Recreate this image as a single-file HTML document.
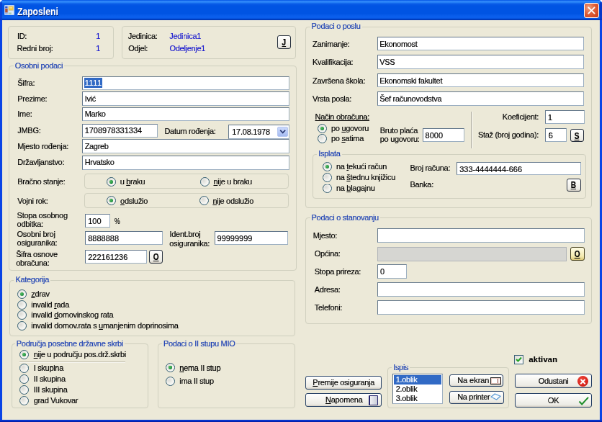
<!DOCTYPE html>
<html><head><meta charset="utf-8"><title>Zaposleni</title>
<style>
html,body{margin:0;padding:0;}
body{width:602px;height:422px;overflow:hidden;background:#fff;position:relative;}
#w{position:absolute;left:0;top:0;width:836.11px;height:586.11px;transform:scale(0.72);transform-origin:0 0;will-change:transform;font-family:"Liberation Sans",sans-serif;font-size:11px;color:#000;letter-spacing:-0.3px;-webkit-text-stroke:0.18px;overflow:hidden;
 background:#0A44E6;border-radius:5px 5px 0 0;}
#bb{position:absolute;left:0;right:0;bottom:0;height:3.2px;background:linear-gradient(to bottom,#0A40E0 0%,#0630C8 45%,#001CA0 100%);}
#tb{position:absolute;left:0;top:0;width:100%;height:27.7px;border-radius:5px 5px 0 0;
 background:linear-gradient(to bottom,#0A5CE8 0%,#1568EE 4%,#3D95FF 7%,#2A85F8 11%,#0A5CE8 19%,#0054E3 30%,#0054E3 66%,#0A5EEC 80%,#0A5EEC 90%,#0040C4 95%,#0034B0 100%);}
#title{position:absolute;left:24.31px;top:7.6px;color:#fff;font-weight:bold;font-size:14.4px;line-height:17px;letter-spacing:0;-webkit-text-stroke:0;text-shadow:1px 1px 0 #0A2A80;white-space:nowrap;transform-origin:0 0;transform:scaleX(0.845);}
#client{position:absolute;left:2.8px;top:27.7px;right:3.5px;bottom:3.1px;background:#ECE9D8;}
#close{position:absolute;left:810.83px;top:4.4px;width:18.7px;height:18.7px;border:1px solid #fff;border-radius:3px;background:radial-gradient(circle at 30% 30%,#F0A080 0%,#E0603A 45%,#C93A16 100%);}
.t{position:absolute;white-space:nowrap;line-height:13px;height:13px;}
.blue{color:#1818D0;}
.num{letter-spacing:0;}
.gb{position:absolute;box-sizing:border-box;border:1px solid #D0D0BF;border-radius:4px;}
.gl{position:absolute;white-space:nowrap;line-height:13px;color:#1C40B4;background:#ECE9D8;padding:0 2px;}
.in{position:absolute;box-sizing:border-box;border:1px solid;border-color:#64788C #9DB0C2 #9DB0C2 #64788C;background:#fff;line-height:15.32px;padding-left:3.5px;white-space:nowrap;overflow:hidden;}
.in.gray{background:#D6D6D2;border-color:#B0B4B8;}
.sel{background:#316AC5;color:#fff;padding:1px 0.6px 1px 0.6px;letter-spacing:0.45px;margin-left:-0.6px;}
.rb{position:absolute;width:13px;height:13px;box-sizing:border-box;border:1px solid #2F5A6E;border-radius:50%;background:radial-gradient(circle at 35% 35%,#DCDCD7 0%,#F3F3EF 50%,#fff 100%);}
.rb.on::after{content:"";position:absolute;left:3px;top:3px;width:5px;height:5px;border-radius:50%;background:radial-gradient(circle at 35% 35%,#4CBF5A,#2A9548 60%,#1E7038);}
.btn{position:absolute;box-sizing:border-box;border:1px solid #2A4468;border-radius:3px;background:linear-gradient(to bottom,#fff 0%,#F5F4EF 50%,#ECEBE5 85%,#D6D0C5 100%);text-align:center;white-space:nowrap;}
.btn.b{font-weight:bold;font-size:12px;letter-spacing:0;padding-top:0.8px;-webkit-text-stroke:0.2px;border-color:#27303E;}
.btn.b u{display:inline-block;transform:scaleX(0.84);}
.btn.yel{background:linear-gradient(to bottom,#FFFCE4,#F4EAB0 70%,#DCC878);border-color:#4A4420;}
.hl{position:absolute;height:0;border-top:1px solid #C4C1B0;border-bottom:1px solid #F8F7F0;}
.vl{position:absolute;width:0;border-left:1px solid #ACA899;border-right:1px solid #fff;}
.cb{position:absolute;width:13px;height:13px;box-sizing:border-box;border:1px solid #3E6478;background:linear-gradient(135deg,#DCDCD7,#fff);}
.cb svg{position:absolute;left:-1px;top:-1px;}
.lb{position:absolute;box-sizing:border-box;border:1px solid;border-color:#64788C #9DB0C2 #9DB0C2 #64788C;background:#fff;line-height:12.5px;padding:1px 1px;overflow:hidden;}
.lb div{padding-left:3px;height:12.8px;}
.lb .selrow{background:#316AC5;color:#fff;}
.abs{position:absolute;}
.ic-x{position:absolute;width:15.4px;height:15.4px;border-radius:50%;background:radial-gradient(circle at 40% 35%,#F0483C,#D8251C 60%,#B01810);}
.ic-x::before,.ic-x::after{content:"";position:absolute;left:3.2px;top:6.5px;width:9px;height:2.4px;background:#fff;transform:rotate(45deg);}
.ic-x::after{transform:rotate(-45deg);}
.dd{position:absolute;right:0.8px;top:2px;bottom:1.6px;width:15.5px;border-radius:2px;background:linear-gradient(to bottom,#CBD9FB,#B6C9F7 60%,#A5BBF0);border:1px solid #B5C7F2;box-sizing:border-box;}
.dd::after{content:"";position:absolute;left:3.4px;top:1.6px;width:5.4px;height:5.4px;border-right:2.4px solid #2C3C74;border-bottom:2.4px solid #2C3C74;transform:rotate(45deg) scale(0.82);}
.ic-note{position:absolute;width:13.5px;height:13.5px;border:1.5px solid #24246E;border-left-width:2.5px;background:linear-gradient(to right,#F0F0F4,#C8CCD8);box-sizing:border-box;border-radius:1px;}
.ic-scr{position:absolute;width:15px;height:10.5px;border:1.5px solid #1a1a1a;background:linear-gradient(to right,#fff 0,#fff 68%,#8A3A30 68%,#8A3A30 80%,#fff 80%);box-sizing:border-box;box-shadow:inset 0 0 0 1px #E8C8C0;}
</style></head><body>
<div id="w">
<div id="tb"></div>
<div id="client"></div><div id="bb"></div><div class="abs" style="left:0;top:3px;width:2.8px;height:25px;background:#0A38D0;opacity:.7"></div><div class="abs" style="right:0;top:3px;width:3.5px;height:25px;background:#0630C0;opacity:.8"></div>
<svg class="abs" style="left:5.6px;top:7.4px" width="14" height="14" viewBox="0 0 14 14"><rect x="0" y="0" width="14" height="14" rx="1" fill="#BCD2F6"/><rect x="1.2" y="1.8" width="3.2" height="2.4" fill="#3454C4"/><rect x="1.2" y="4.8" width="3.4" height="5.6" fill="#B4502C"/><rect x="1.2" y="10.6" width="3.4" height="2.2" fill="#9CB4E8"/><rect x="5.8" y="1.8" width="6.8" height="5.6" fill="#F6C840"/><rect x="7" y="3" width="4" height="1.6" fill="#FBE38A"/><rect x="5.8" y="8.2" width="6.8" height="4.6" fill="#DCEAF8"/><rect x="5.8" y="10.4" width="4" height="2.4" fill="#A4CCB0"/></svg>
<div id="title">Zaposleni</div>
<div id="close"><svg width="19" height="19" viewBox="0 0 19 19"><path d="M5.3 5.3 L13.6 13.6 M13.6 5.3 L5.3 13.6" stroke="#fff" stroke-width="1.9" stroke-linecap="round"/></svg></div>
<div class="gb " style="left:10.97px;top:36.11px;width:147.08px;height:45.97px;"></div>
<div class="t " style="left:23.89px;top:44.14px;">ID:</div>
<div class="t " style="left:23.61px;top:60.81px;">Redni broj:</div>
<div class="t blue num" style="left:133.33px;top:44.42px;">1</div>
<div class="t blue num" style="left:133.33px;top:61.09px;">1</div>
<div class="gb " style="left:169.44px;top:36.11px;width:241.67px;height:45.97px;"></div>
<div class="t " style="left:177.78px;top:44.42px;">Jedinica:</div>
<div class="t " style="left:178.19px;top:61.09px;">Odjel:</div>
<div class="t blue" style="left:235.28px;top:44.42px;">Jedinica1</div>
<div class="t blue" style="left:235.56px;top:61.09px;">Odeljenje1</div>
<div class="btn b" style="left:385.0px;top:49.31px;width:19.17px;height:18.47px;line-height:16.47px;"><u>J</u></div>
<div class="gb " style="left:11.53px;top:91.39px;width:400.28px;height:285.0px;"></div>
<div class="gl" style="left:18.75px;top:84.89px;">Osobni podaci</div>
<div class="in " style="left:113.89px;top:105.56px;width:288.33px;height:19.72px;"></div>
<div class="t " style="left:117.64px;top:109.01px;"><span class="sel">1111</span></div>
<div class="t " style="left:24.31px;top:109.14px;">Šifra:</div>
<div class="in " style="left:113.89px;top:127.08px;width:288.33px;height:19.72px;"></div>
<div class="t " style="left:117.64px;top:130.53px;">Ivić</div>
<div class="t " style="left:24.31px;top:130.67px;">Prezime:</div>
<div class="in " style="left:113.89px;top:148.61px;width:288.33px;height:19.72px;"></div>
<div class="t " style="left:117.64px;top:152.06px;">Marko</div>
<div class="t " style="left:24.31px;top:152.20px;">Ime:</div>
<div class="in num" style="left:113.89px;top:171.53px;width:105.56px;height:19.72px;"></div>
<div class="t num" style="left:117.64px;top:174.98px;">1708978331334</div>
<div class="t " style="left:24.31px;top:174.84px;">JMBG:</div>
<div class="t " style="left:228.47px;top:176.23px;">Datum rođenja:</div>
<div class="in date num" style="left:317.36px;top:172.64px;width:84.58px;height:20.28px;"><i class="dd"></i></div>
<div class="t num" style="left:322.22px;top:177.06px;letter-spacing:-0.25px;">17.08.1978</div>
<div class="in " style="left:113.89px;top:193.33px;width:288.33px;height:19.72px;"></div>
<div class="t " style="left:117.64px;top:196.78px;">Zagreb</div>
<div class="t " style="left:24.31px;top:196.92px;">Mjesto rođenja:</div>
<div class="in " style="left:113.89px;top:215.83px;width:288.33px;height:19.72px;"></div>
<div class="t " style="left:117.64px;top:219.28px;">Hrvatsko</div>
<div class="t " style="left:24.31px;top:219.42px;">Državljanstvo:</div>
<div class="gb inner" style="left:116.67px;top:241.39px;width:284.03px;height:20.42px;"></div>
<div class="t " style="left:24.31px;top:245.67px;">Bračno stanje:</div>
<div class="rb on" style="left:148.08px;top:246.00px;"></div>
<div class="t " style="left:166.67px;top:245.95px;">u <u>b</u>raku</div>
<div class="rb" style="left:278.22px;top:246.00px;"></div>
<div class="t " style="left:296.53px;top:245.95px;"><u>n</u>ije u braku</div>
<div class="gb inner" style="left:116.67px;top:267.64px;width:284.03px;height:21.11px;"></div>
<div class="t " style="left:24.31px;top:272.62px;">Vojni rok:</div>
<div class="rb on" style="left:148.08px;top:272.25px;"></div>
<div class="t " style="left:167.08px;top:272.62px;"><u>o</u>dslužio</div>
<div class="rb" style="left:277.11px;top:272.25px;"></div>
<div class="t " style="left:295.42px;top:272.62px;"><u>n</u>ije odslužio</div>
<div class="t " style="left:23.61px;top:293.03px;">Stopa osobnog</div>
<div class="t " style="left:23.61px;top:305.39px;">odbitka:</div>
<div class="in num" style="left:118.47px;top:297.22px;width:34.31px;height:18.75px;"></div>
<div class="t num" style="left:122.22px;top:301.23px;">100</div>
<div class="t " style="left:159.31px;top:301.23px;transform:scaleX(0.78);transform-origin:0 0;">%</div>
<div class="t " style="left:23.61px;top:318.73px;">Osobni broj</div>
<div class="t " style="left:23.61px;top:331.09px;">osiguranika:</div>
<div class="in num" style="left:118.47px;top:321.25px;width:107.64px;height:18.75px;"></div>
<div class="t num" style="left:122.22px;top:325.26px;">8888888</div>
<div class="t " style="left:235.56px;top:318.87px;">Ident.broj</div>
<div class="t " style="left:235.28px;top:332.06px;">osiguranika:</div>
<div class="in num" style="left:297.78px;top:321.25px;width:101.94px;height:18.75px;"></div>
<div class="t num" style="left:301.53px;top:325.26px;">99999999</div>
<div class="t " style="left:22.22px;top:346.92px;">Šifra osnove</div>
<div class="t " style="left:22.22px;top:359.28px;">obračuna:</div>
<div class="in num" style="left:118.47px;top:346.94px;width:85.69px;height:18.75px;"></div>
<div class="t num" style="left:122.22px;top:350.95px;">222161236</div>
<div class="btn b" style="left:207.36px;top:347.22px;width:19.03px;height:18.89px;line-height:16.89px;"><u>O</u></div>
<div class="gb " style="left:12.5px;top:388.89px;width:397.92px;height:77.78px;"></div>
<div class="gl" style="left:19.44px;top:382.39px;">Kategorija</div>
<div class="rb on" style="left:24.47px;top:402.11px;"></div>
<div class="t " style="left:43.33px;top:402.20px;"><u>z</u>drav</div>
<div class="rb" style="left:24.47px;top:416.60px;"></div>
<div class="t " style="left:43.33px;top:416.69px;">invalid <u>r</u>ada</div>
<div class="rb" style="left:24.47px;top:431.08px;"></div>
<div class="t " style="left:43.33px;top:431.17px;">invalid <u>d</u>omovinskog rata</div>
<div class="rb" style="left:24.47px;top:445.57px;"></div>
<div class="t " style="left:43.33px;top:445.66px;">invalid domov.rata s <u>u</u>manjenim doprinosima</div>
<div class="gb " style="left:15.97px;top:477.08px;width:189.58px;height:89.58px;"></div>
<div class="gl" style="left:20.83px;top:470.58px;">Područja posebne državne skrbi</div>
<div class="rb on" style="left:27.39px;top:485.72px;"></div>
<div class="t " style="left:46.67px;top:485.67px;"><u>n</u>ije u području pos.drž.skrbi</div>
<div class="rb" style="left:27.39px;top:505.31px;"></div>
<div class="t " style="left:46.67px;top:505.26px;">I skupina</div>
<div class="rb" style="left:27.39px;top:520.03px;"></div>
<div class="t " style="left:46.67px;top:519.98px;">II skupina</div>
<div class="rb" style="left:27.39px;top:535.03px;"></div>
<div class="t " style="left:46.67px;top:534.98px;">III skupina</div>
<div class="rb" style="left:27.39px;top:550.03px;"></div>
<div class="t " style="left:46.67px;top:549.98px;">grad Vukovar</div>
<div class="hl" style="left:27.08px;top:501.81px;width:147.22px;"></div>
<div class="gb " style="left:218.75px;top:477.08px;width:191.67px;height:89.58px;"></div>
<div class="gl" style="left:225.0px;top:470.58px;">Podaci o II stupu MIO</div>
<div class="rb on" style="left:230.31px;top:504.47px;"></div>
<div class="t " style="left:249.31px;top:504.56px;"><u>n</u>ema II stup</div>
<div class="rb" style="left:230.31px;top:522.53px;"></div>
<div class="t " style="left:249.31px;top:522.62px;">ima II stup</div>
<div class="gb " style="left:424.31px;top:36.53px;width:398.19px;height:252.64px;"></div>
<div class="gl" style="left:430.56px;top:30.03px;">Podaci o poslu</div>
<div class="in " style="left:524.31px;top:50.69px;width:286.81px;height:19.72px;"></div>
<div class="t " style="left:527.22px;top:54.70px;">Ekonomost</div>
<div class="t " style="left:434.03px;top:54.98px;">Zanimanje:</div>
<div class="in " style="left:524.31px;top:76.11px;width:286.81px;height:19.72px;"></div>
<div class="t " style="left:527.22px;top:80.12px;">VSS</div>
<div class="t " style="left:434.03px;top:80.39px;">Kvalifikacija:</div>
<div class="in " style="left:524.31px;top:101.53px;width:286.81px;height:19.72px;"></div>
<div class="t " style="left:527.22px;top:105.53px;">Ekonomski fakultet</div>
<div class="t " style="left:434.03px;top:105.81px;">Završena škola:</div>
<div class="in " style="left:524.31px;top:126.94px;width:286.81px;height:19.72px;"></div>
<div class="t " style="left:527.22px;top:130.95px;">Šef računovodstva</div>
<div class="t " style="left:434.03px;top:131.23px;">Vrsta posla:</div>
<div class="vl" style="left:653.61px;top:154.72px;height:50.83px;"></div>
<div class="t " style="left:437.5px;top:155.53px;"><u>Način obračuna:</u></div>
<div class="rb on" style="left:440.72px;top:171.56px;"></div>
<div class="t " style="left:460.0px;top:171.92px;">po <u>u</u>govoru</div>
<div class="rb" style="left:440.72px;top:186.14px;"></div>
<div class="t " style="left:460.0px;top:186.23px;">po <u>s</u>atima</div>
<div class="t " style="left:527.78px;top:174.70px;">Bruto plaća</div>
<div class="t " style="left:527.78px;top:186.92px;">po ugovoru:</div>
<div class="in num" style="left:586.81px;top:177.78px;width:58.47px;height:19.17px;"></div>
<div class="t num" style="left:590.56px;top:181.78px;">8000</div>
<div class="t " style="right:88.06px;top:155.95px;">Koeficijent:</div>
<div class="in num" style="left:757.22px;top:153.33px;width:54.72px;height:18.47px;"></div>
<div class="t num" style="left:760.97px;top:157.34px;">1</div>
<div class="t " style="right:88.06px;top:180.53px;">Staž (broj godina):</div>
<div class="in num" style="left:757.22px;top:178.06px;width:29.86px;height:18.89px;"></div>
<div class="t num" style="left:761.67px;top:181.92px;">6</div>
<div class="btn b" style="left:791.67px;top:178.75px;width:19.44px;height:18.19px;line-height:16.19px;"><u>S</u></div>
<div class="gb " style="left:434.03px;top:213.61px;width:379.86px;height:62.22px;"></div>
<div class="gl" style="left:440.28px;top:207.11px;">Isplata</div>
<div class="rb on" style="left:447.67px;top:225.03px;"></div>
<div class="t " style="left:466.94px;top:225.12px;">na <u>t</u>ekući račun</div>
<div class="rb" style="left:447.67px;top:239.89px;"></div>
<div class="t " style="left:466.94px;top:239.98px;">na <u>š</u>tednu knjižicu</div>
<div class="rb" style="left:447.67px;top:254.61px;"></div>
<div class="t " style="left:466.94px;top:254.98px;">na <u>b</u>lagajnu</div>
<div class="t " style="left:569.44px;top:226.78px;">Broj računa:</div>
<div class="in num" style="left:634.44px;top:224.72px;width:172.22px;height:18.75px;"></div>
<div class="t num" style="left:638.19px;top:228.73px;">333-4444444-666</div>
<div class="t " style="left:569.44px;top:250.12px;">Banka:</div>
<div class="btn b" style="left:786.81px;top:247.64px;width:19.86px;height:18.33px;line-height:16.33px;"><u>B</u></div>
<div class="gb " style="left:424.31px;top:302.36px;width:398.19px;height:148.06px;"></div>
<div class="gl" style="left:430.56px;top:295.86px;">Podaci o stanovanju</div>
<div class="in " style="left:524.31px;top:317.22px;width:287.36px;height:19.72px;"></div>
<div class="t " style="left:434.72px;top:320.53px;">Mjesto:</div>
<div class="in gray" style="left:524.31px;top:342.92px;width:262.22px;height:19.72px;"></div>
<div class="btn b yel" style="left:791.67px;top:342.92px;width:20.0px;height:18.75px;line-height:16.75px;"><u>O</u></div>
<div class="t " style="left:436.81px;top:346.23px;">Općina:</div>
<div class="in num" style="left:524.31px;top:367.22px;width:40.97px;height:19.72px;"></div>
<div class="t num" style="left:528.06px;top:371.23px;">0</div>
<div class="t " style="left:436.81px;top:370.53px;">Stopa prireza:</div>
<div class="in " style="left:524.31px;top:392.22px;width:287.36px;height:19.72px;"></div>
<div class="t " style="left:436.81px;top:395.53px;">Adresa:</div>
<div class="in " style="left:524.31px;top:417.22px;width:287.36px;height:19.72px;"></div>
<div class="t " style="left:436.81px;top:420.53px;">Telefoni:</div>
<div class="cb" style="left:714.44px;top:492.78px;"><svg viewBox="0 0 13 13" width="13" height="13"><path d="M3 6 L5.5 8.5 L10 3.5" stroke="#21A121" stroke-width="2" fill="none"/></svg></div>
<div class="t " style="left:734.44px;top:492.89px;letter-spacing:0.25px;"><b>aktivan</b></div>
<div class="btn " style="left:424.31px;top:522.36px;width:105.83px;height:19.03px;line-height:17.03px;"><u>P</u>remije osiguranja</div>
<div class="btn " style="left:424.31px;top:546.39px;width:105.97px;height:18.47px;line-height:16.47px;padding-left:1px;"><u>N</u>apomena</div>
<div class="ic-note" style="left:511.81px;top:549.31px;"></div>
<div class="gb " style="left:538.47px;top:510.28px;width:169.03px;height:57.08px;"></div>
<div class="gl" style="left:544.17px;top:503.78px;">Ispis</div>
<div class="lb" style="left:544.72px;top:519.03px;width:69.86px;height:41.53px;"><div class="selrow">1.oblik</div><div>2.oblik</div><div>3.oblik</div></div>
<div class="btn " style="left:624.17px;top:520.0px;width:75.28px;height:17.22px;line-height:15.219999999999999px;text-align:left;padding-left:10px;letter-spacing:-0.05px;">Na ekran</div>
<div class="ic-scr" style="left:681.39px;top:523.75px;"></div>
<div class="btn " style="left:624.17px;top:543.19px;width:75.56px;height:17.92px;line-height:15.920000000000002px;text-align:left;padding-left:10px;">Na printer</div>
<svg class="abs" style="left:681.39px;top:546.25px;" width="15" height="10" viewBox="0 0 15 10"><path d="M1 5.2 L6.2 1 L14 4.3 L8.6 9 Z" fill="#F8FCFF" stroke="#5A9AD6" stroke-width="1.2"/></svg>
<div class="btn " style="left:715.0px;top:518.89px;width:107.22px;height:20.56px;line-height:18.56px;">Odustani</div>
<div class="btn " style="left:715.0px;top:546.25px;width:107.22px;height:20.14px;line-height:18.14px;">OK</div>
<div class="ic-x" style="left:801.88px;top:522.02px;"></div>
<svg class="abs" style="left:802.5px;top:550.28px;" width="16" height="14" viewBox="0 0 16 14"><path d="M1.5 7.5 L5.2 11.5 L14 1.8" stroke="#1E8E2A" stroke-width="2" fill="none"/></svg>
</div>
</body></html>
